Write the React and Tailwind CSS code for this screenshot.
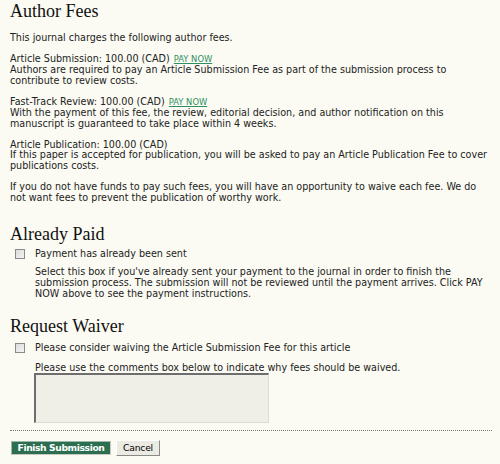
export default function App() {
  const body = "font-['DejaVu_Sans',Verdana,sans-serif] text-[9.6px] leading-[10.8px] text-[#222]";
  const h = "font-['Liberation_Serif',Georgia,serif] text-[18px] leading-[20px] text-[#111]";
  const link = "text-[8.4px] text-[#2f8f63] underline ml-[4px]";
  const Box = () => (
    <span className="inline-block w-[10px] h-[10px] border border-[#8a8a8a] bg-gradient-to-br from-[#dcdcdc] to-[#f4f4f4] shrink-0" />
  );
  return (
    <div className="w-[500px] h-[464px] bg-[#fbfbf3] pl-[10px] pr-[8px] pt-[1px] overflow-hidden">
      <h2 className={h}>Author Fees</h2>
      <div className={body}>
        <p className="mt-[12px]">This journal charges the following author fees.</p>
        <p className="mt-[10.5px]">
          Article Submission: 100.00 (CAD)<a className={link}>PAY NOW</a>
          <br />
          Authors are required to pay an Article Submission Fee as part of the submission process to
          <br />
          contribute to review costs.
        </p>
        <p className="mt-[10.5px]">
          Fast-Track Review: 100.00 (CAD)<a className={link}>PAY NOW</a>
          <br />
          With the payment of this fee, the review, editorial decision, and author notification on this
          <br />
          manuscript is guaranteed to take place within 4 weeks.
        </p>
        <p className="mt-[10px]">
          Article Publication: 100.00 (CAD)
          <br />
          If this paper is accepted for publication, you will be asked to pay an Article Publication Fee to cover
          <br />
          publications costs.
        </p>
        <p className="mt-[10px]">
          If you do not have funds to pay such fees, you will have an opportunity to waive each fee. We do
          <br />
          not want fees to prevent the publication of worthy work.
        </p>
      </div>

      <h2 className={h + " mt-[20px]"}>Already Paid</h2>
      <div className={body}>
        <div className="mt-[5px] flex items-center">
          <div className="w-[25px] pl-[5px] flex items-center">
            <Box />
          </div>
          <span>Payment has already been sent</span>
        </div>
        <p className="mt-[8px] pl-[25px]">
          Select this box if you've already sent your payment to the journal in order to finish the
          <br />
          submission process. The submission will not be reviewed until the payment arrives. Click PAY
          <br />
          NOW above to see the payment instructions.
        </p>
      </div>

      <h2 className={h + " mt-[16px]"}>Request Waiver</h2>
      <div className={body}>
        <div className="mt-[7px] flex items-center">
          <div className="w-[25px] pl-[5px] flex items-center">
            <Box />
          </div>
          <span>Please consider waiving the Article Submission Fee for this article</span>
        </div>
        <p className="mt-[9px] pl-[25px]">Please use the comments box below to indicate why fees should be waived.</p>
        <div className="ml-[24px] w-[235px] h-[50px] bg-[#efeee7] border-t-2 border-l-2 border-t-[#6e6e6e] border-l-[#6e6e6e] border-r border-b border-r-[#dcdcd4] border-b-[#dcdcd4]" />
      </div>

      <div className="mt-[7px] w-[482px] border-t border-dotted border-[#777]" />

      <div className="mt-[9px] flex items-center gap-[5px] pl-[1px]">
        <button className="h-[14px] w-[100px] bg-[#2b6e50] border border-t-[#9cb8aa] border-l-[#9cb8aa] border-r-[#c9c9c0] border-b-[#c9c9c0] text-white font-['DejaVu_Sans',Tahoma,sans-serif] text-[9.2px] leading-[12px] font-bold tracking-[-0.4px]">
          Finish Submission
        </button>
        <button className="h-[16px] w-[44px] bg-[#ecebe3] border border-t-[#ffffff] border-l-[#ffffff] border-r-[#8a8a84] border-b-[#8a8a84] text-black font-['DejaVu_Sans',Tahoma,sans-serif] text-[9.2px] leading-[14px] tracking-[-0.2px]">
          Cancel
        </button>
      </div>
    </div>
  );
}
